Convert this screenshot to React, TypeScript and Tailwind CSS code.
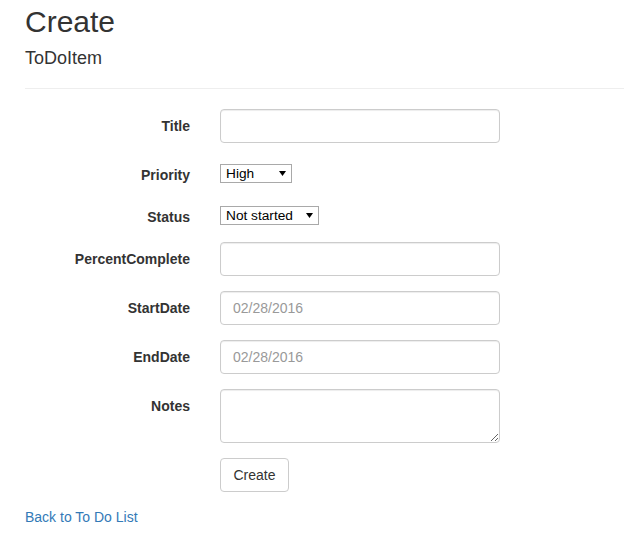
import React from "react";

const inputCls =
  "block w-[280px] h-[34px] px-3 py-1.5 border border-[#ccc] rounded-[4px] bg-white text-[14px] text-[#555] shadow-[inset_0_1px_1px_rgba(0,0,0,0.075)] placeholder:text-[#999] outline-none";

const Label: React.FC<{ text: string }> = ({ text }) => (
  <label className="w-[165px] shrink-0 text-right font-bold pt-[7px]">{text}</label>
);

const NativeSelect: React.FC<{ options: string[]; width: string }> = ({ options, width }) => (
  <div className={`relative mt-[6px] ${width}`}>
    <select className="appearance-none block w-full h-[19px] pl-[5px] pr-4 border border-[#a9a9a9] bg-white text-[13.7px] leading-[17px] text-black outline-none">
      {options.map((o) => (
        <option key={o}>{o}</option>
      ))}
    </select>
    <svg
      className="absolute right-[6px] top-[7px] pointer-events-none"
      width="7"
      height="5"
      viewBox="0 0 7 5"
    >
      <path d="M0 0h7L3.5 5z" fill="#000" />
    </svg>
  </div>
);

export default function App() {
  return (
    <div className="px-[25px] overflow-hidden font-['Liberation_Sans',Arial,sans-serif] text-[14px] leading-[20px] text-[#333] bg-white">
      <h2 className="text-[30px] leading-[33px] font-normal mt-[5px] mb-[10px]">Create</h2>

      <form onSubmit={(e) => e.preventDefault()}>
        <h4 className="text-[18px] leading-[20px] font-normal mt-[10px] mb-[10px]">ToDoItem</h4>
        <hr className="border-0 border-t border-[#eee] my-5 -mr-[25px]" />

        <div className="flex mb-[15px]">
          <Label text="Title" />
          <div className="ml-[30px]">
            <input className={inputCls} />
          </div>
        </div>

        <div className="flex mb-[15px]">
          <Label text="Priority" />
          <div className="ml-[30px]">
            <NativeSelect options={["High", "Medium", "Low"]} width="w-[72px]" />
          </div>
        </div>

        <div className="flex mb-[15px]">
          <Label text="Status" />
          <div className="ml-[30px]">
            <NativeSelect options={["Not started", "In progress", "Completed"]} width="w-[99px]" />
          </div>
        </div>

        <div className="flex mb-[15px]">
          <Label text="PercentComplete" />
          <div className="ml-[30px]">
            <input className={inputCls} />
          </div>
        </div>

        <div className="flex mb-[15px]">
          <Label text="StartDate" />
          <div className="ml-[30px]">
            <input className={inputCls} placeholder="02/28/2016" />
          </div>
        </div>

        <div className="flex mb-[15px]">
          <Label text="EndDate" />
          <div className="ml-[30px]">
            <input className={inputCls} placeholder="02/28/2016" />
          </div>
        </div>

        <div className="flex mb-[15px]">
          <Label text="Notes" />
          <div className="ml-[30px]">
            <textarea
              rows={2}
              className="block w-[280px] h-[54px] px-3 py-1.5 border border-[#ccc] rounded-[4px] bg-white text-[14px] text-[#555] shadow-[inset_0_1px_1px_rgba(0,0,0,0.075)] outline-none"
            />
          </div>
        </div>

        <div className="flex mb-[15px]">
          <div className="w-[165px] shrink-0" />
          <div className="ml-[30px]">
            <button
              type="submit"
              className="h-[34px] w-[69px] border border-[#ccc] rounded-[4px] bg-white text-[14px] text-[#333]"
            >
              Create
            </button>
          </div>
        </div>
      </form>

      <div>
        <a href="#" className="text-[#337ab7]">
          Back to To Do List
        </a>
      </div>
    </div>
  );
}
